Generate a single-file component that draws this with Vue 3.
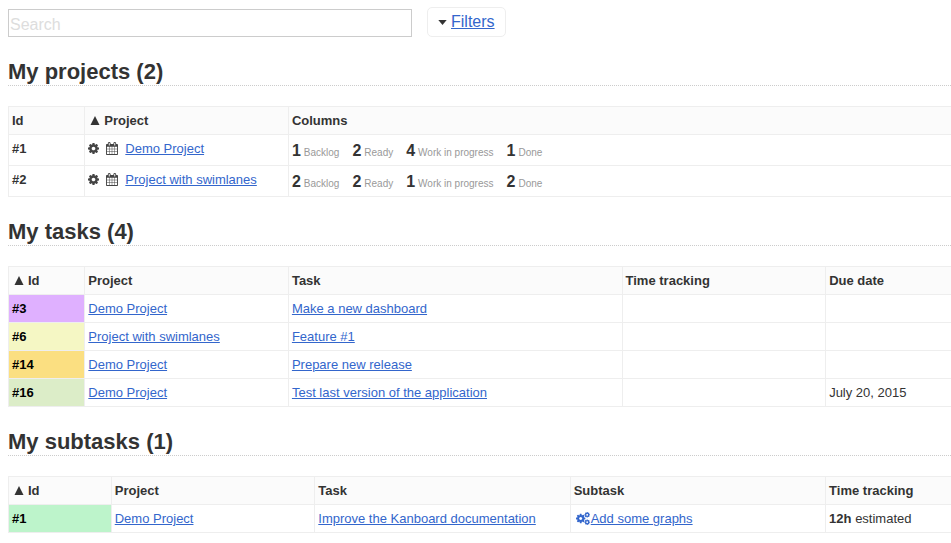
<script setup>
import { ref } from 'vue'

const search = ref('')

const cog =
  'M1152 896q0-106-75-181t-181-75-181 75-75 181 75 181 181 75 181-75 75-181zm512-109v222q0 12-8 23t-20 13l-185 28q-19 54-39 91 35 50 107 138 10 12 10 25t-9 23q-27 37-99 108t-94 71q-12 0-26-9l-138-108q-44 23-91 38-16 136-29 186-7 28-36 28h-222q-14 0-24.5-8.5t-11.5-21.5l-28-184q-49-16-90-37l-141 107q-10 9-25 9-14 0-25-11-126-114-165-168-7-10-7-23 0-12 8-23 15-21 51-66.5t54-70.5q-27-50-41-99l-183-27q-13-2-21-12.5t-8-23.5v-222q0-12 8-23t19-13l186-28q14-46 39-92-40-57-107-138-10-12-10-24 0-10 9-23 26-36 98.5-107.5t94.5-71.5q13 0 26 10l138 107q44-23 91-38 16-136 29-186 7-28 36-28h222q14 0 24.5 8.5t11.5 21.5l28 184q49 16 90 37l142-107q9-9 24-9 13 0 25 10 129 119 165 170 7 8 7 22 0 12-8 23-15 21-51 66.5t-54 70.5q26 50 41 98l183 28q13 2 21 12.5t8 23.5z'
const calendar =
  'M192 1664h288v-288h-288v288zm352 0h320v-288h-320v288zm-352-352h288v-320h-288v320zm352 0h320v-320h-320v320zm-352-384h288v-288h-288v288zm736 736h320v-288h-320v288zm-384-736h320v-288h-320v288zm768 736h288v-288h-288v288zm-384-352h320v-320h-320v320zm-352-864v-288q0-13-9.5-22.5t-22.5-9.5h-64q-13 0-22.5 9.5t-9.5 22.5v288q0 13 9.5 22.5t22.5 9.5h64q13 0 22.5-9.5t9.5-22.5zm736 864h288v-320h-288v320zm-384-384h320v-288h-320v288zm384 0h288v-288h-288v288zm32-480v-288q0-13-9.5-22.5t-22.5-9.5h-64q-13 0-22.5 9.5t-9.5 22.5v288q0 13 9.5 22.5t22.5 9.5h64q13 0 22.5-9.5t9.5-22.5zm384-64v1280q0 52-38 90t-90 38h-1408q-52 0-90-38t-38-90v-1280q0-52 38-90t90-38h128v-96q0-66 47-113t113-47h64q66 0 113 47t47 113v96h384v-96q0-66 47-113t113-47h64q66 0 113 47t47 113v96h128q52 0 90 38t38 90z'

const columnNames = ['Backlog', 'Ready', 'Work in progress', 'Done']
const projects = [
  { id: 1, name: 'Demo Project', counts: [1, 2, 4, 1] },
  { id: 2, name: 'Project with swimlanes', counts: [2, 2, 1, 2] },
]
const tasks = [
  { id: 3, color: 'purple', project: 'Demo Project', title: 'Make a new dashboard', due: '' },
  { id: 6, color: 'yellow', project: 'Project with swimlanes', title: 'Feature #1', due: '' },
  { id: 14, color: 'orange', project: 'Demo Project', title: 'Prepare new release', due: '' },
  { id: 16, color: 'lime', project: 'Demo Project', title: 'Test last version of the application', due: 'July 20, 2015' },
]
const subtasks = [
  {
    id: 1,
    color: 'green',
    project: 'Demo Project',
    task: 'Improve the Kanboard documentation',
    title: 'Add some graphs',
    estimate: '12h',
  },
]
</script>

<template>
  <main class="page">
    <form class="toolbar" @submit.prevent>
      <input v-model="search" class="search" type="text" placeholder="Search" aria-label="Search" />
      <div class="filters">
        <svg class="caret" viewBox="0 0 10 6" aria-hidden="true"><path d="M0 0h10L5 6z" /></svg>
        <a href="#filters">Filters</a>
      </div>
    </form>

    <section>
      <h2>My projects ({{ projects.length }})</h2>
      <table>
        <colgroup>
          <col class="w-id" />
          <col class="w-project" />
          <col />
        </colgroup>
        <thead>
          <tr>
            <th>Id</th>
            <th>
              <a class="sort" href="#sort-project"><svg viewBox="0 0 10 10" aria-hidden="true"><path d="M5 0l5 10H0z" /></svg>Project</a>
            </th>
            <th>Columns</th>
          </tr>
        </thead>
        <tbody>
          <tr v-for="p in projects" :key="p.id">
            <td><a class="id" :href="`#project-${p.id}`">#{{ p.id }}</a></td>
            <td>
              <div class="project">
                <a class="tool" :href="`#settings-${p.id}`" aria-label="Project settings"><svg class="cog" viewBox="128 128 1536 1536"><path :d="cog" /></svg></a>
                <a class="tool" :href="`#calendar-${p.id}`" aria-label="Calendar"><svg class="calendar" viewBox="64 0 1664 1792"><path :d="calendar" /></svg></a>
                <a :href="`#board-${p.id}`">{{ p.name }}</a>
              </div>
            </td>
            <td class="counts-cell">
              <div class="counts">
                <span v-for="(name, i) in columnNames" :key="name" class="count">
                  <strong>{{ p.counts[i] }}</strong><small>{{ name }}</small>
                </span>
              </div>
            </td>
          </tr>
        </tbody>
      </table>
    </section>

    <section>
      <h2>My tasks ({{ tasks.length }})</h2>
      <table>
        <colgroup>
          <col class="w-id" />
          <col class="w-project" />
          <col class="w-task" />
          <col class="w-project" />
          <col />
        </colgroup>
        <thead>
          <tr>
            <th>
              <a class="sort" href="#sort-task"><svg viewBox="0 0 10 10" aria-hidden="true"><path d="M5 0l5 10H0z" /></svg>Id</a>
            </th>
            <th>Project</th>
            <th>Task</th>
            <th>Time tracking</th>
            <th>Due date</th>
          </tr>
        </thead>
        <tbody>
          <tr v-for="t in tasks" :key="t.id">
            <td :class="t.color"><a class="id dark" :href="`#task-${t.id}`">#{{ t.id }}</a></td>
            <td><a href="#board">{{ t.project }}</a></td>
            <td><a :href="`#task-${t.id}`">{{ t.title }}</a></td>
            <td></td>
            <td>{{ t.due }}</td>
          </tr>
        </tbody>
      </table>
    </section>

    <section>
      <h2>My subtasks ({{ subtasks.length }})</h2>
      <table>
        <colgroup>
          <col class="w-subid" />
          <col class="w-project" />
          <col class="w-quarter" />
          <col class="w-quarter" />
          <col />
        </colgroup>
        <thead>
          <tr>
            <th>
              <a class="sort" href="#sort-subtask"><svg viewBox="0 0 10 10" aria-hidden="true"><path d="M5 0l5 10H0z" /></svg>Id</a>
            </th>
            <th>Project</th>
            <th>Task</th>
            <th>Subtask</th>
            <th>Time tracking</th>
          </tr>
        </thead>
        <tbody>
          <tr v-for="s in subtasks" :key="s.id">
            <td :class="s.color"><a class="id dark" href="#subtask">#{{ s.id }}</a></td>
            <td><a href="#board">{{ s.project }}</a></td>
            <td><a href="#task">{{ s.task }}</a></td>
            <td>
              <a class="status" href="#status"><svg viewBox="0 0 1920 1792" aria-hidden="true">
                <path :d="cog" transform="translate(-107 149) scale(.834)" />
                <path :d="cog" transform="translate(1088 -64) scale(.5)" />
                <path :d="cog" transform="translate(1088 960) scale(.5)" />
              </svg><span>{{ s.title }}</span></a>
            </td>
            <td><strong>{{ s.estimate }}</strong> estimated</td>
          </tr>
        </tbody>
      </table>
    </section>
  </main>
</template>

<style>
body {
  background: #fff;
}
</style>

<style scoped>
.page {
  padding: 7px 0 8px 8px;
  color: #333;
  font-family: "Liberation Sans", Arial, Helvetica, sans-serif;
  font-size: 13px;
  line-height: 15px;
}

a {
  color: #36c;
}

svg {
  fill: currentColor;
}

.toolbar {
  display: flex;
  align-items: flex-end;
  gap: 15px;
}

.search {
  box-sizing: border-box;
  width: 404px;
  height: 28px;
  padding: 4px 1px 0;
  border: 1px solid #ccc;
  border-radius: 0;
  color: #999;
  font: inherit;
  font-size: 16px;
  outline: none;
}

.search::placeholder {
  color: #ddd;
  opacity: 1;
}

.filters {
  display: flex;
  align-items: center;
  gap: 4px;
  padding: 5px 10px;
  border: 1px solid #eee;
  border-radius: 5px;
  font-size: 16px;
  line-height: 18px;
}

.caret {
  width: 9px;
  height: 5px;
}

h2 {
  margin: 23px 0 20px;
  padding-bottom: 1px;
  border-bottom: 1px dotted #ccc;
  font-size: 22px;
  line-height: 24px;
}

table {
  width: 100%;
  border-collapse: collapse;
  table-layout: fixed;
}

.w-id {
  width: 8.1%;
}

.w-subid {
  width: 10.9%;
}

.w-project {
  width: 21.6%;
}

.w-task {
  width: 35.4%;
}

.w-quarter {
  width: 27.1%;
}

th,
td {
  padding: 6px 3px;
  border: 1px solid #eee;
  border-right: 0;
  text-align: left;
  vertical-align: top;
}

th {
  background: #fbfbfb;
}

.sort {
  display: flex;
  align-items: center;
  gap: 4px;
  padding-left: 2px;
  color: #333;
  text-decoration: none;
}

.sort svg {
  width: 10px;
  height: 9px;
}

.id {
  color: #333;
  font-weight: bold;
  text-decoration: none;
}

.dark {
  color: #000;
}

.project {
  display: flex;
  align-items: center;
  gap: 7px;
}

.tool {
  display: flex;
  color: #444;
}

.cog {
  width: 11px;
  height: 11px;
}

.calendar {
  width: 12px;
  height: 13px;
}

.counts-cell {
  padding-bottom: 4px;
}

.counts {
  display: flex;
  gap: 13px;
  line-height: 20px;
}

.count {
  display: flex;
  align-items: baseline;
  gap: 3px;
}

.count strong {
  font-size: 16px;
}

.count small {
  color: #999;
  font-size: 10px;
  line-height: 12px;
}

.status {
  display: flex;
  align-items: center;
  gap: 1px;
  padding-left: 2px;
  text-decoration: none;
}

.status svg {
  width: 14px;
  height: 13px;
}

.status span {
  text-decoration: underline;
}

.purple {
  background: #dfb0ff;
}

.yellow {
  background: #f5f7c4;
}

.orange {
  background: #fbdf81;
}

.lime {
  background: #dcedc8;
}

.green {
  background: #bdf4cb;
}
</style>
